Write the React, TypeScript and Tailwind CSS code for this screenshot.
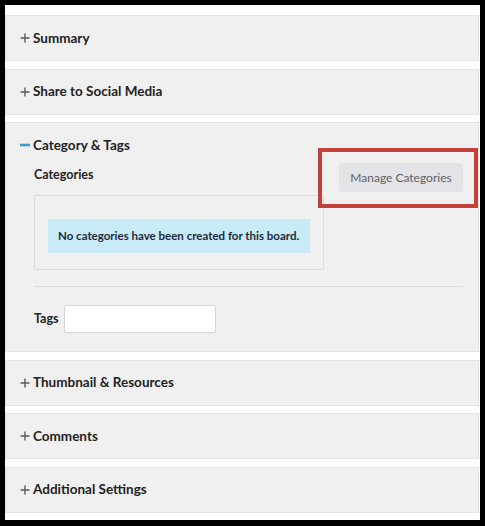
import { ReactNode } from "react";

function PlusIcon() {
  return (
    <svg width="10" height="10" viewBox="0 0 10 10" className="shrink-0">
      <path d="M5 0.5v9M0.5 5h9" stroke="#5a5a5a" strokeWidth="1.4" />
    </svg>
  );
}

function MinusIcon() {
  return (
    <svg width="10" height="10" viewBox="0 0 10 10" className="shrink-0">
      <path d="M0 5h10" stroke="#3d9ad6" strokeWidth="2.6" />
    </svg>
  );
}

function Panel({ title, open, children }: { title: string; open?: boolean; children?: ReactNode }) {
  if (!open) {
    return (
      <div className="h-[46px] bg-[#f0f0f0] border border-[#e3e3e3] flex items-center pl-[14px] gap-[3px]">
        <PlusIcon />
        <span className="text-[13.5px] font-bold text-[#222]">{title}</span>
      </div>
    );
  }
  return (
    <div className="bg-[#f0f0f0] border border-[#e3e3e3] pt-[13px] pb-[18px] pl-[14px] pr-[15px]">
      <div className="flex items-center gap-[3px] h-[18px]">
        <MinusIcon />
        <span className="text-[13.5px] font-bold text-[#222]">{title}</span>
      </div>
      <div className="pl-[14px]">{children}</div>
    </div>
  );
}

export default function App() {
  return (
    <div className="min-h-[526px] bg-black p-[5px] pb-[6px]" style={{ fontFamily: "Lato, 'Open Sans', sans-serif" }}>
      <div className="bg-white h-[515px] pt-[10px] pr-[1px] flex flex-col gap-[7.5px]">
        <Panel title="Summary" />
        <Panel title="Share to Social Media" />
        <Panel title="Category & Tags" open>
          <div className="flex justify-between items-start mt-[12px]">
            <div>
              <div className="text-[12.5px] font-bold text-[#222] leading-[18px]">Categories</div>
              <div className="mt-[11px] w-[290px] border border-[#dcdcdc] pt-[23px] pb-[16px] px-[13px]">
                <div className="bg-[#c9ebf7] h-[34px] flex items-center pl-[10px] text-[11.5px] font-bold text-[#1d2a3a] whitespace-nowrap">
                  No categories have been created for this board.
                </div>
              </div>
            </div>
            <div className="relative -mt-[3px]">
              <button className="h-[29px] w-[124px] rounded-[3px] bg-[#e3e4e8] text-[12px] text-[#5f6166]">
                Manage Categories
              </button>
              <div className="absolute -left-[21px] -right-[15px] -top-[15px] -bottom-[16px] border-4 border-[#c4403a] pointer-events-none" />
            </div>
          </div>
          <div className="mt-[16px] border-t border-[#dcdcdc]" />
          <div className="mt-[18px] flex items-center gap-[5px]">
            <span className="text-[12.5px] font-bold text-[#222]">Tags</span>
            <input className="w-[152px] h-[28px] bg-white border border-[#d6d6d6] rounded-[2px] outline-none px-2 text-[13px]" />
          </div>
        </Panel>
        <Panel title="Thumbnail & Resources" />
        <Panel title="Comments" />
        <Panel title="Additional Settings" />
      </div>
    </div>
  );
}
